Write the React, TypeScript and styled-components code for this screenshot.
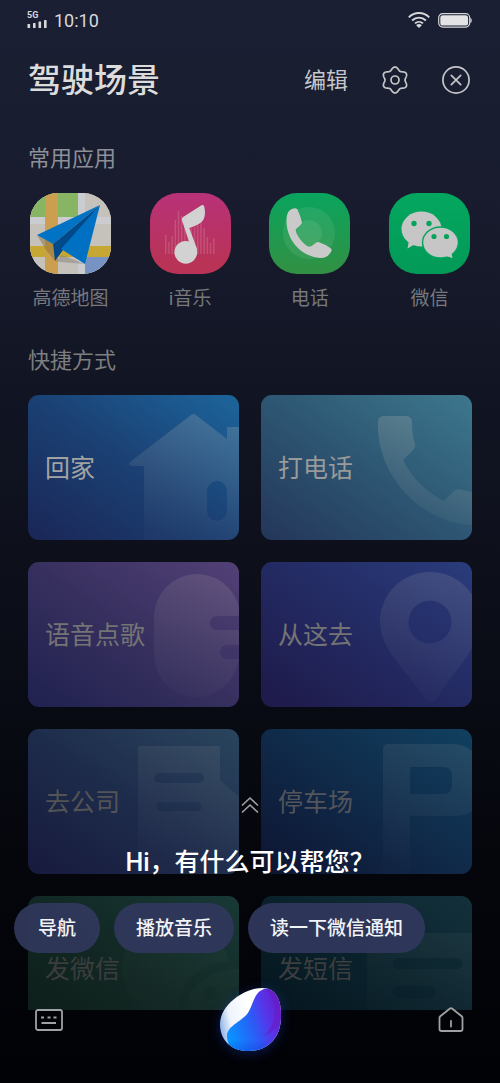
import React from 'react';
import styled, { createGlobalStyle } from 'styled-components';

const GlobalStyle = createGlobalStyle`
  * { box-sizing: border-box; }
  body {
    margin: 0;
    background: #020307;
    font-family: Roboto, "Noto Sans CJK SC", sans-serif;
  }
  button {
    margin: 0;
    padding: 0;
    border: 0;
    background: none;
    color: inherit;
    font: inherit;
    cursor: pointer;
  }
  svg { display: block; }
  h1, h2, p, ul { margin: 0; padding: 0; font-weight: 400; }
`;

const Screen = styled.div`
  position: relative;
  display: flex;
  flex-direction: column;
  height: 100vh;
  overflow: hidden;
  background: linear-gradient(180deg, #1a1f33 0%, #181c2e 18%, #121625 33%, #0d101b 52%, #080a12 68%, #04050a 84%, #010206 100%);
`;

const StatusBar = styled.div`
  display: flex;
  justify-content: space-between;
  align-items: center;
  height: 40px;
  padding: 0 28px 0 27px;
  color: #d8d8d9;
`;

const StatusGroup = styled.div<{ $gap: number }>`
  display: flex;
  align-items: center;
  gap: ${(p) => p.$gap}px;
`;

const Signal = styled.div`
  display: flex;
  flex-direction: column;
  gap: 1px;
  font-size: 9px;
  line-height: 7px;
  font-weight: 700;
`;

const Clock = styled.time`
  padding-top: 2px;
  font-size: 18px;
  line-height: 24px;
`;

const Header = styled.header`
  display: flex;
  align-items: center;
  justify-content: space-between;
  height: 80px;
  padding: 0 30px 0 28px;
`;

const Title = styled.h1`
  padding-top: 2px;
  font-size: 33px;
  line-height: 40px;
  font-weight: 500;
  color: #dcdcdc;
`;

const Actions = styled.div`
  display: flex;
  align-items: center;
  gap: 33px;
  color: #c6c7ca;
`;

const TextButton = styled.button`
  padding-top: 2px;
  font-size: 22px;
  line-height: 32px;
`;

const IconButton = styled.button`
  display: block;
`;

const Content = styled.main`
  flex: 1;
  min-height: 0;
  overflow: hidden;
  margin-bottom: 73px;
  padding: 22px 28px 0;
`;

const SectionTitle = styled.h2<{ $color: string }>`
  padding-top: 1px;
  font-size: 22px;
  line-height: 32px;
  color: ${(p) => p.$color};
`;

const AppRow = styled.div`
  display: flex;
  justify-content: space-between;
  padding: 18px 2px 30px;
`;

const AppButton = styled.button`
  display: flex;
  flex-direction: column;
  align-items: center;
  gap: 10px;
  width: 81px;
  font-size: 19px;
  line-height: 30px;
  white-space: nowrap;
  color: #77787d;
`;

const AppTile = styled.span<{ $bg: string }>`
  display: block;
  width: 81px;
  height: 81px;
  border-radius: 28px;
  overflow: hidden;
  background: ${(p) => p.$bg};
`;

const CardGrid = styled.div`
  display: grid;
  grid-template-columns: 1fr 1fr;
  gap: 22px;
  padding-top: 18px;
`;

const Card = styled.button<{ $from: string; $mid: string; $to: string; $ink: string }>`
  position: relative;
  height: 145px;
  padding: 2px 0 0 17px;
  border-radius: 11px;
  overflow: hidden;
  text-align: left;
  font-size: 25px;
  line-height: 36px;
  color: ${(p) => p.$ink};
  background: linear-gradient(to top right, ${(p) => p.$from}, ${(p) => p.$mid} 50%, ${(p) => p.$to});
`;

const Watermark = styled.svg`
  position: absolute;
  top: 0;
  right: 0;
`;

const CardLabel = styled.span`
  position: relative;
`;

const Dock = styled.section`
  position: absolute;
  left: 0;
  right: 0;
  bottom: 0;
  display: flex;
  flex-direction: column;
  align-items: center;
  padding-bottom: 31px;
`;

const ExpandButton = styled.button`
  color: #a2a3a6;
`;

const Greeting = styled.p`
  padding: 34px 0 25px;
  font-size: 25px;
  line-height: 30px;
  font-weight: 500;
  color: #ffffff;
`;

const Chips = styled.div`
  align-self: stretch;
  display: flex;
  gap: 14px;
  padding: 0 14px;
`;

const Chip = styled.button`
  min-width: 86px;
  height: 50px;
  padding: 2px 22px 0;
  border-radius: 25px;
  background: rgba(48, 56, 92, 0.93);
  font-size: 19px;
  line-height: 28px;
  font-weight: 500;
  color: #f2f3f6;
  white-space: nowrap;
`;

const DockBar = styled.div`
  align-self: stretch;
  display: flex;
  align-items: center;
  justify-content: space-between;
  padding: 35px 36px 0 35px;
  color: #a0a1a4;
`;

const OrbButton = styled.button`
  border-radius: 50%;
  filter: drop-shadow(0 2px 6px rgba(30, 70, 220, 0.35));
`;

const gearPath =
  Array.from({ length: 120 }, (_, i) => {
    const a = (i / 120) * Math.PI * 2;
    const r = 11.5 - 1.5 * Math.cos(6 * a);
    return `${i ? 'L' : 'M'}${(14 + r * Math.cos(a)).toFixed(2)} ${(14 + r * Math.sin(a)).toFixed(2)}`;
  }).join('') + 'Z';

const SignalBars = () => (
  <svg width="21" height="8" viewBox="0 0 21 8" fill="currentColor">
    <rect x="0.5" y="4" width="2.6" height="4" rx="0.6" />
    <rect x="6" y="3" width="2.6" height="5" rx="0.6" />
    <rect x="11.5" y="1.5" width="2.6" height="6.5" rx="0.6" />
    <rect x="17" y="0" width="2.6" height="8" rx="0.6" />
  </svg>
);

const Wifi = () => (
  <svg width="22" height="16" viewBox="0 0 22 16" fill="none" stroke="currentColor" strokeWidth="1.9">
    <path d="M.8 5.4C6.4-.4 15.6-.4 21.2 5.4" />
    <path d="M4.1 8.5C8 4.7 14 4.7 17.9 8.5" />
    <path d="M7 11.4c2.3-2.1 5.7-2.1 8 0" />
    <path d="M8.1 13.2c1.6-1.6 4.200-1.6 5.800 0L11 16z" fill="currentColor" stroke="none" />
  </svg>
);

const Battery = () => (
  <svg width="34" height="15" viewBox="0 0 34 15">
    <rect x="0.7" y="0.7" width="31" height="13.4" rx="4" fill="none" stroke="currentColor" strokeWidth="1.2" />
    <rect x="2.3" y="2.3" width="27.8" height="10.2" rx="2.6" fill="#e4e4e4" />
    <path d="M32.3 4.7c1.9.6 1.9 4.8 0 5.4z" fill="currentColor" />
  </svg>
);

const Gear = () => (
  <svg width="28" height="28" viewBox="0 0 28 28" fill="none" stroke="currentColor" strokeWidth="1.7" strokeLinejoin="round">
    <path d={gearPath} />
    <circle cx="14" cy="14" r="4" />
  </svg>
);

const Close = () => (
  <svg width="28" height="28" viewBox="0 0 28 28" fill="none" stroke="currentColor" strokeWidth="1.7" strokeLinecap="round">
    <circle cx="14" cy="14" r="13.1" />
    <path d="M9.3 9.3l9.4 9.4M18.7 9.3l-9.4 9.4" />
  </svg>
);

const MapIcon = () => (
  <svg width="81" height="81" viewBox="0 0 81 81">
    <rect width="81" height="81" fill="#c5c2bc" />
    <rect width="49" height="25" fill="#88b564" />
    <rect y="24" width="81" height="7" fill="#cbccd0" />
    <rect x="48" width="7" height="81" fill="#cbccd0" />
    <rect y="53" width="81" height="11" fill="#c7a734" />
    <rect x="55" y="64" width="26" height="17" fill="#7793c4" />
    <rect x="15" width="13" height="81" fill="#cc9e4f" />
    <path d="M7 42l16 9 2 17-9-11z" fill="#8a6f35" opacity="0.5" />
    <path d="M25 68l7-6 23 9-25-2z" fill="#77736a" opacity="0.4" />
    <path d="M70 12L7 42l16 9z" fill="#0073c4" />
    <path d="M70 12L23 51l2 17 8-11z" fill="#004a8c" />
    <path d="M70 12L31 56l24 15z" fill="#0071c2" />
  </svg>
);

const barTops = [42, 49, 43, 27, 18, 23, 30, 34, 35, 34, 32, 29, 35, 44, 50, 45];

const MusicIcon = () => (
  <svg width="81" height="81" viewBox="0 0 81 81">
    {barTops.map((top, i) => (
      <rect key={i} x={15 + i * 3.2} y={top} width="1.5" height={61 - top} fill="#fff" opacity="0.15" />
    ))}
    <g fill="#d2d2d2">
      <circle cx="35.8" cy="59.3" r="11.4" />
      <path d="M51.500 12.300Q53.800 11.200 54.200 13.500Q56.500 23.500 52 28.500Q48.500 32 39.300 35L46.500 54.500Q48 60 45 65L38 54.500Q40.500 52 39 48.500L32 27.500Q31.300 25 33.500 23.700Z" />
    </g>
  </svg>
);

const PhoneIcon = () => (
  <svg width="81" height="81" viewBox="0 0 81 81">
    <circle cx="40" cy="40" r="26" fill="#fff" opacity="0.08" />
    <circle cx="40" cy="40" r="13" fill="#fff" opacity="0.08" />
    <path
      d="M21 17Q26 14 28.5 16.5Q31.5 23 33 29.5Q33 31 27 36Q26 38 29 43Q33 50 39 53.5Q42 54 44 52Q48 48.5 49.5 49Q57 51.5 62 55.5Q63.5 57.5 61.500 59.500Q58 65.500 51 65C34 64 17 48 17.500 27Q17.500 20 21 17Z"
      fill="#cacaca"
    />
  </svg>
);

const WeChatIcon = () => (
  <svg width="81" height="81" viewBox="0 0 81 81">
    <ellipse cx="32.5" cy="36" rx="20" ry="17.5" fill="#c6c6c6" />
    <path d="M20 47l-1.5 8.5L28 50z" fill="#c6c6c6" />
    <circle cx="25" cy="30.5" r="2.7" fill="#04a45d" />
    <circle cx="40" cy="30.5" r="2.7" fill="#04a45d" />
    <ellipse cx="51.5" cy="49.5" rx="18.7" ry="16.3" fill="#04a45d" />
    <ellipse cx="51.5" cy="49.5" rx="17.2" ry="14.8" fill="#c6c6c6" />
    <path d="M55 62.5l8.5 2.5-1.5-7z" fill="#c6c6c6" />
    <circle cx="45" cy="43.5" r="2.6" fill="#04a45d" />
    <circle cx="57.5" cy="43.5" r="2.6" fill="#04a45d" />
  </svg>
);

const apps = [
  { name: '高德地图', bg: '#c5c2bc', icon: <MapIcon /> },
  { name: 'i音乐', bg: 'linear-gradient(180deg, #b83279, #b83355 90%)', icon: <MusicIcon /> },
  { name: '电话', bg: 'linear-gradient(180deg, #0aa45e, #329043)', icon: <PhoneIcon /> },
  { name: '微信', bg: 'linear-gradient(180deg, #04a75f, #029a57)', icon: <WeChatIcon /> },
];

interface Shortcut {
  name: string;
  from: string;
  mid: string;
  to: string;
  ink: string;
  glow: number;
  shape: string;
}

const shortcuts: Shortcut[] = [
  {
    name: '回家', from: '#1a2656', mid: '#1b4073', to: '#1c659c', ink: '#a3a3a2', glow: 0.22,
    shape: 'M116 145V71H104Q99 70 102 67L163 20Q165 18 168 20L199 44V32H211V145ZM189 86A10 10 0 0 0 179 96V116A10 10 0 0 0 199 116V96A10 10 0 0 0 189 86Z',
  },
  {
    name: '打电话', from: '#243659', mid: '#2d5673', to: '#3d788d', ink: '#999a99', glow: 0.24,
    shape: 'M123 21H145Q151 21 151 28Q151 40 154 49Q155 51 153 54L142 65C150 82 166 98 183 106L193 96Q196 93 201 95L211 97V130C160 128 115 80 117 27Q117 21 123 21Z',
  },
  {
    name: '语音点歌', from: '#1f214e', mid: '#37305f', to: '#524076', ink: '#747474', glow: 0.14,
    shape: 'M126 53A43 43 0 0 1 211 46V54H189A7 7 0 0 0 189 68H211V83H199A7 7 0 0 0 199 97H211C207 119 190 135 169 135C145 135 126 116 126 92Z',
  },
  {
    name: '从这去', from: '#1e1949', mid: '#232a62', to: '#2a3c7c', ink: '#747474', glow: 0.14,
    shape: 'M169 10C197 10 219 32 219 60C219 86 193 108 174 139Q170 142 166 139C147 110 119 88 119 60C119 32 141 10 169 10ZM169 38.5A21.5 21.5 0 1 0 169 81.5A21.5 21.5 0 1 0 169 38.5Z',
  },
  {
    name: '去公司', from: '#171a3c', mid: '#1e2c4c', to: '#2a455e', ink: '#545455', glow: 0.09,
    shape: 'M112 17H190Q192 17 192 19V51L211 68V145H110V19Q110 17 112 17ZM131 44A5 5 0 0 0 131 54H171A5 5 0 0 0 171 44ZM131 73A5 5 0 0 0 131 82H171A5 5 0 0 0 171 73Z',
  },
  {
    name: '停车场', from: '#0d1431', mid: '#102a49', to: '#114060', ink: '#54555a', glow: 0.1,
    shape: 'M127 15H191Q203 15 211 22V82Q203 87 193 87H149V145H122V20Q122 15 127 15ZM149 38V65H182Q191 65 191 56V47Q191 38 182 38Z',
  },
  {
    name: '发微信', from: '#0c1c18', mid: '#122824', to: '#183937', ink: '#3b3d3d', glow: 0.035,
    shape: 'M94 72C94 42 118 22 147 22C175 22 196 40 201 66C172 66 149 88 149 118V128C114 126 94 100 94 72ZM211 73V90A7 7 0 1 0 211 104V145H160C148 115 162 73 211 73ZM182 90A7 7 0 1 0 182 104A7 7 0 1 0 182 90Z',
  },
  {
    name: '发短信', from: '#04131c', mid: '#0a212b', to: '#13313b', ink: '#3b3d3e', glow: 0.06,
    shape: 'M106 37H211V145H106ZM137 62A5 5 0 0 0 137 73H196A5 5 0 0 0 196 62ZM137 90A6 6 0 0 0 137 102H169A6 6 0 0 0 169 90Z',
  },
];

const ShortcutCard = ({ item, id }: { item: Shortcut; id: string }) => (
  <Card type="button" $from={item.from} $mid={item.mid} $to={item.to} $ink={item.ink}>
    <Watermark width="211" height="145" viewBox="0 0 211 145" aria-hidden="true">
      <defs>
        <linearGradient id={id} gradientUnits="userSpaceOnUse" x1="180" y1="10" x2="145" y2="140">
          <stop offset="0" stopColor="#d0c8b8" stopOpacity={item.glow} />
          <stop offset="1" stopColor="#d0c8b8" stopOpacity={item.glow * 0.1} />
        </linearGradient>
      </defs>
      <path d={item.shape} fill={`url(#${id})`} fillRule="evenodd" />
    </Watermark>
    <CardLabel>{item.name}</CardLabel>
  </Card>
);

const Orb = () => (
  <svg width="62" height="64" viewBox="0 0 62 64" aria-hidden="true">
    <defs>
      <linearGradient id="orbShell" x1="0" y1="0.6" x2="0.5" y2="0.5">
        <stop offset="0" stopColor="#8fb4ea" />
        <stop offset="0.35" stopColor="#eef3fc" />
        <stop offset="1" stopColor="#ffffff" />
      </linearGradient>
      <linearGradient id="orbWave" x1="0" y1="0.65" x2="1" y2="0.3">
        <stop offset="0" stopColor="#0894ff" />
        <stop offset="0.45" stopColor="#2b5cf6" />
        <stop offset="0.7" stopColor="#5636ea" />
        <stop offset="1" stopColor="#681cc8" />
      </linearGradient>
      <linearGradient id="orbShade" x1="0" y1="0" x2="0" y2="1">
        <stop offset="0.5" stopColor="#0a28c8" stopOpacity="0" />
        <stop offset="1" stopColor="#0a38e0" stopOpacity="0.4" />
      </linearGradient>
      <clipPath id="orbClip">
        <path d="M42 0C57 0 61 13 61 28C61 50 48 63 28 63C12 63 0 53 0 36C0 17 24 0 42 0Z" />
      </clipPath>
    </defs>
    <g clipPath="url(#orbClip)">
      <rect width="62" height="64" fill="url(#orbShell)" />
      <path d="M48 0C34 2 34 15 29 23C24 33 7 37 7 48C7 53 9 57 12 64H62V0Z" fill="url(#orbWave)" />
      <path d="M46 1C59 16 57 38 42 49C55 44 62 34 62 24V0Z" fill="#6a1bc4" opacity="0.55" />
      <path d="M8 46C20 52 42 51 61 40V64H10Z" fill="url(#orbShade)" />
    </g>
  </svg>
);

export default function App() {
  return (
    <>
      <GlobalStyle />
      <Screen>
        <StatusBar>
          <StatusGroup $gap={6}>
            <Signal>
              <span>5G</span>
              <SignalBars />
            </Signal>
            <Clock>10:10</Clock>
          </StatusGroup>
          <StatusGroup $gap={8}>
            <Wifi />
            <Battery />
          </StatusGroup>
        </StatusBar>

        <Header>
          <Title>驾驶场景</Title>
          <Actions>
            <TextButton type="button">编辑</TextButton>
            <IconButton type="button" aria-label="设置"><Gear /></IconButton>
            <IconButton type="button" aria-label="关闭"><Close /></IconButton>
          </Actions>
        </Header>

        <Content>
          <SectionTitle $color="#8e9097">常用应用</SectionTitle>
          <AppRow>
            {apps.map((app) => (
              <AppButton type="button" key={app.name}>
                <AppTile $bg={app.bg}>{app.icon}</AppTile>
                <span>{app.name}</span>
              </AppButton>
            ))}
          </AppRow>
          <SectionTitle $color="#7d7e80">快捷方式</SectionTitle>
          <CardGrid>
            {shortcuts.map((item, i) => (
              <ShortcutCard key={item.name} item={item} id={`glow${i}`} />
            ))}
          </CardGrid>
        </Content>

        <Dock>
          <ExpandButton type="button" aria-label="展开">
            <svg width="18" height="18" viewBox="0 0 18 18" fill="none" stroke="currentColor" strokeWidth="1.6">
              <path d="M1 9.5l8-7.5 8 7.5M1 16.500L9 9l8 7.500" />
            </svg>
          </ExpandButton>
          <Greeting>Hi，有什么可以帮您？</Greeting>
          <Chips>
            <Chip type="button">导航</Chip>
            <Chip type="button">播放音乐</Chip>
            <Chip type="button">读一下微信通知</Chip>
          </Chips>
          <DockBar>
            <IconButton type="button" aria-label="键盘">
              <svg width="28" height="22" viewBox="0 0 28 22" fill="none" stroke="currentColor" strokeWidth="1.8">
                <rect x="1" y="1" width="26" height="20" rx="2" />
                <path d="M6 8.5h3M12.5 8.5h3M18.5 8.5h3M6.5 14h14.5" />
              </svg>
            </IconButton>
            <OrbButton type="button" aria-label="语音助手"><Orb /></OrbButton>
            <IconButton type="button" aria-label="主页">
              <svg width="26" height="26" viewBox="0 0 26 26" fill="none" stroke="currentColor" strokeWidth="1.8" strokeLinejoin="round" strokeLinecap="round">
                <path d="M1.5 11Q1.5 10 2.3 9.3L12 1.5Q13 .8 14 1.5L23.7 9.3Q24.5 10 24.5 11V22Q24.5 24 22.5 24H3.5Q1.5 24 1.5 22Z" />
                <path d="M13 14v5.5" />
              </svg>
            </IconButton>
          </DockBar>
        </Dock>
      </Screen>
    </>
  );
}
